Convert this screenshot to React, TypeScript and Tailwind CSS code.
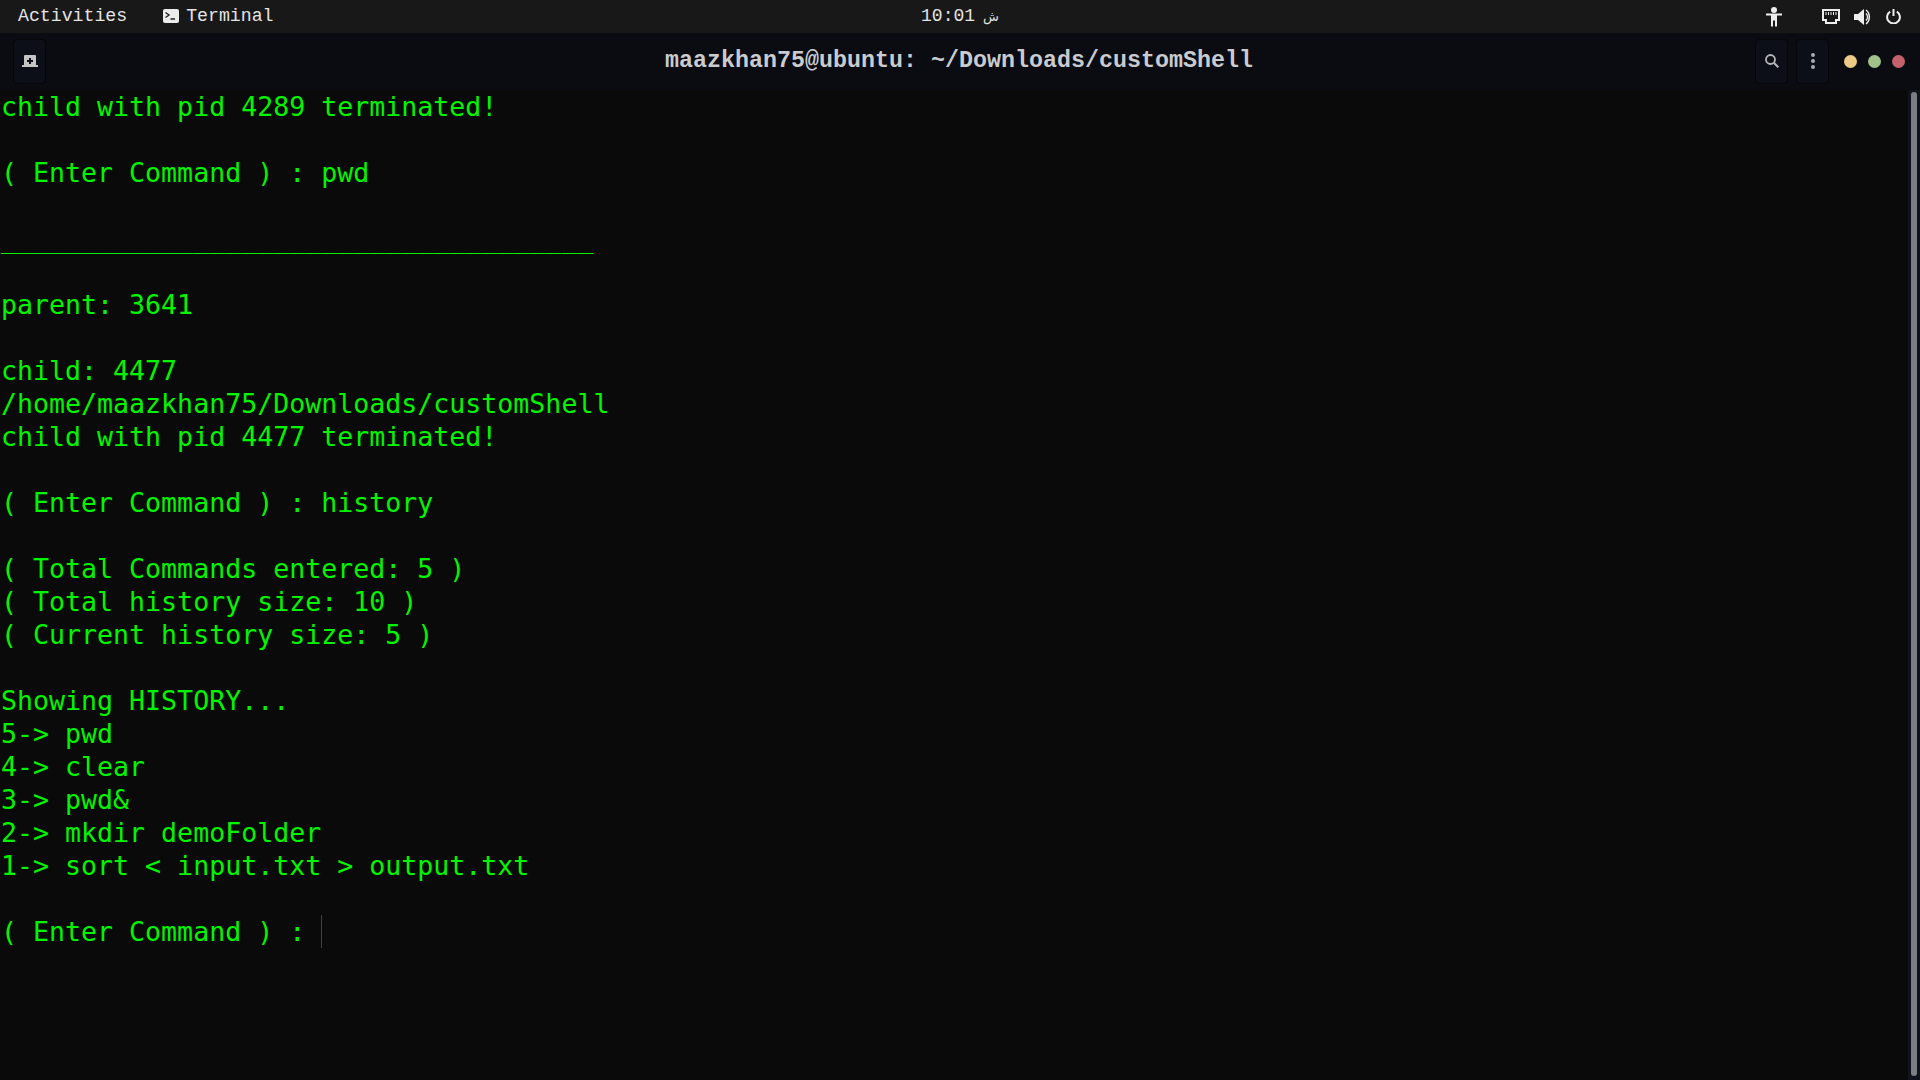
import React from 'react';

const LINES = [
  'child with pid 4289 terminated!',
  '',
  '( Enter Command ) : pwd',
  '',
  '_____________________________________',
  '',
  'parent: 3641',
  '',
  'child: 4477',
  '/home/maazkhan75/Downloads/customShell',
  'child with pid 4477 terminated!',
  '',
  '( Enter Command ) : history',
  '',
  '( Total Commands entered: 5 )',
  '( Total history size: 10 )',
  '( Current history size: 5 )',
  '',
  'Showing HISTORY...',
  '5-> pwd',
  '4-> clear',
  '3-> pwd&',
  '2-> mkdir demoFolder',
  '1-> sort < input.txt > output.txt',
  '',
];

const TopBar = () => (
  <div className="grid h-[33px] grid-cols-3 items-center bg-[#181818] font-['Liberation_Mono',monospace] text-[18.2px] text-[#e4e4e4]">
    <div className="flex items-center pl-[18px]">
      <span>Activities</span>
      <span className="ml-[36px] flex items-center gap-[7px]">
        <span className="flex h-[14px] w-[16px] items-center rounded-[2px] bg-[#ececec]">
          <svg viewBox="0 0 16 14" className="h-[14px] w-[16px]" fill="none" stroke="#222" strokeWidth="1.4">
            <path d="M2.5 3.5 6 6 2.5 8.5M7.5 10H12" />
          </svg>
        </span>
        Terminal
      </span>
    </div>
    <div className="flex items-center justify-center gap-[8px] text-[18px]">
      <span>10:01</span>
      <span className="font-['DejaVu_Sans',sans-serif] text-[13px]">ش</span>
    </div>
    <div className="flex items-center justify-end pr-[19px]">
      <svg viewBox="0 0 16 20" className="h-[20px] w-[16px]" fill="#eeeeee">
        <circle cx="8" cy="3" r="3" />
        <path d="M0 6.5h16v2h-5v11H9v-6H7v6H5v-11H0z" />
      </svg>
      <svg viewBox="0 0 18 16" className="ml-[40px] h-[16px] w-[18px]" fill="none" stroke="#eeeeee">
        <path strokeWidth="2" d="M1 1h16v10h-3v3H4v-3H1z" />
        <path strokeWidth="1" d="M4 3v3M6.5 3v3M9 3v3M11.5 3v3M14 3v3" />
      </svg>
      <svg viewBox="0 0 18 18" className="ml-[14px] h-[18px] w-[18px]" fill="none" stroke="#eeeeee">
        <path fill="#eeeeee" stroke="none" d="M0 6h4l6-5v16l-6-5H0z" />
        <path strokeWidth="1.5" d="M12 5.5a5 5 0 0 1 0 7M12 2a9 9 0 0 1 0 14" />
      </svg>
      <svg viewBox="0 0 15 15" className="ml-[14px] h-[15px] w-[15px]" fill="none" stroke="#eeeeee" strokeWidth="2">
        <path d="M4.2 2.6a6.4 6.4 0 1 0 6.6 0" />
        <path d="M7.5 0v7" />
      </svg>
    </div>
  </div>
);

const HeaderButton = ({ children }: { children: React.ReactNode }) => (
  <div className="flex h-[45px] w-[33px] items-center justify-center rounded-[4px] border border-[#05060a] bg-[#0c0f17]">
    {children}
  </div>
);

const HeaderBar = () => (
  <div className="grid h-[57px] grid-cols-[1fr_auto_1fr] items-center bg-[#0a0c12] pb-px pl-[13px] pr-[15px]">
    <div className="flex">
      <HeaderButton>
        <svg viewBox="0 0 16 13" className="h-[13px] w-[16px]">
          <path fill="#c4c4c4" d="M3 0h10a1 1 0 0 1 1 1v9h2v2H0v-2h2V1a1 1 0 0 1 1-1z" />
          <path fill="#0c0f17" d="M7 3h2v2h2v2H9v2H7V7H5V5h2z" />
        </svg>
      </HeaderButton>
    </div>
    <div className="text-center font-['Liberation_Mono',monospace] text-[23.33px] font-bold text-[#c9cbce]">
      maazkhan75@ubuntu: ~/Downloads/customShell
    </div>
    <div className="flex items-center justify-end">
      <div className="flex items-center gap-[8px]">
        <HeaderButton>
          <svg viewBox="0 0 14 14" className="h-[14px] w-[14px]" fill="none" stroke="#b4b6ba">
            <circle cx="5.5" cy="5.5" r="4.5" strokeWidth="1.8" />
            <path d="m8.8 8.8 4.5 4.5" strokeWidth="2" />
          </svg>
        </HeaderButton>
        <HeaderButton>
          <svg viewBox="0 0 4 16" className="h-[16px] w-[4px]" fill="#a8aaae">
            <circle cx="2" cy="2" r="2" />
            <circle cx="2" cy="8" r="2" />
            <circle cx="2" cy="14" r="2" />
          </svg>
        </HeaderButton>
      </div>
      <div className="ml-[15px] flex items-center gap-[11px]">
        <span className="h-[13px] w-[13px] rounded-full bg-[#edca85]" />
        <span className="h-[13px] w-[13px] rounded-full bg-[#a3c18b]" />
        <span className="h-[13px] w-[13px] rounded-full bg-[#c4626c]" />
      </div>
    </div>
  </div>
);

export default function App() {
  return (
    <div className="flex h-[1080px] w-[1920px] flex-col overflow-hidden bg-[#0a0a0a]">
      <TopBar />
      <HeaderBar />
      <div className="flex flex-1">
        {/* terminal output */}
        <div className="flex-1 pl-px font-['DejaVu_Sans_Mono',monospace] text-[26.6px] text-[#00f500]">
          {LINES.map((line, i) => (
            <div key={i} className="h-[33px] whitespace-pre leading-[33px]">
              {line}
            </div>
          ))}
          <div className="flex h-[33px] whitespace-pre leading-[33px]">
            <span>( Enter Command ) : </span>
            <span className="h-[33px] w-px bg-[#b01010]" />
          </div>
        </div>
        {/* scrollbar */}
        <div className="w-[12px] bg-[#10131b] pb-[4px] pl-[3px] pr-[3px] pt-[2px]">
          <div className="h-full w-[6px] rounded-full bg-[#7c7e82]" />
        </div>
      </div>
    </div>
  );
}
